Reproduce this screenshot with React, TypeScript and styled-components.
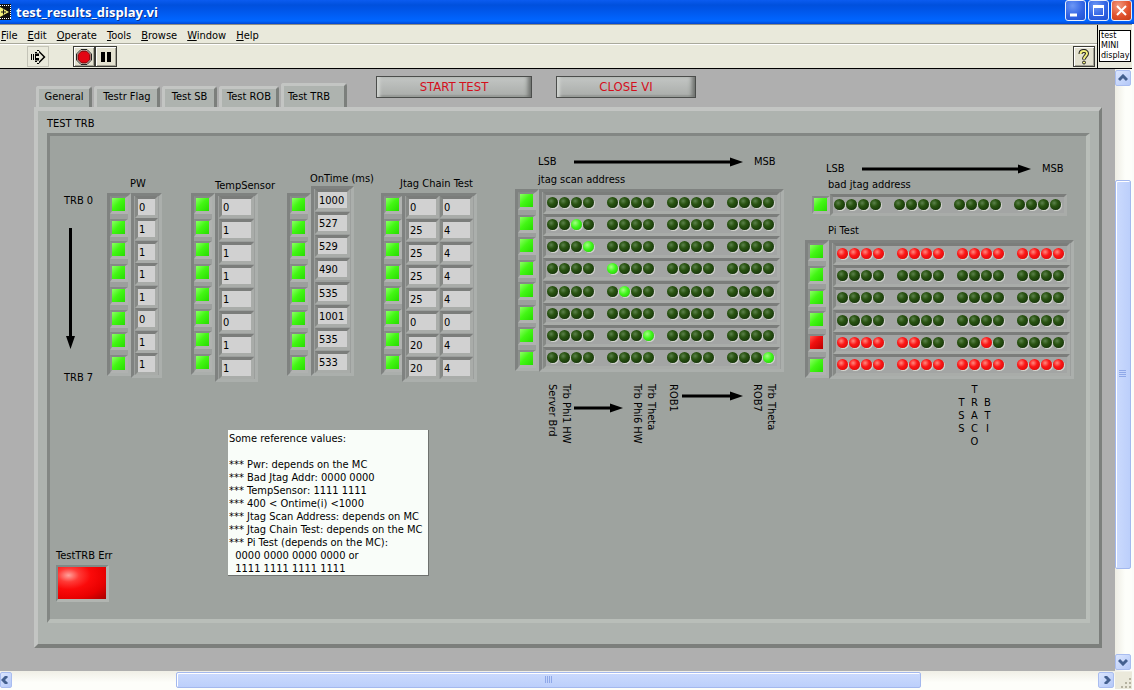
import React from 'react';
import styled, { createGlobalStyle, css } from 'styled-components';

const GlobalStyle = createGlobalStyle`
  * { box-sizing: border-box; }
  body {
    margin: 0;
    background: #fbfcf8;
    font-family: "DejaVu Sans Condensed", "DejaVu Sans", sans-serif;
    font-size: 11px;
    line-height: 14px;
    color: #000;
  }
  button, input { font: inherit; color: inherit; margin: 0; padding: 0; }
`;

/* ---------- window chrome ---------- */

const Window = styled.div`
  display: flex;
  flex-direction: column;
  min-height: 100vh;
  overflow: hidden;
`;

const TitleBar = styled.header`
  display: flex;
  align-items: center;
  height: 24px;
  gap: 4px;
  background: linear-gradient(#0b5cf0 0, #0050dd 5px, #0054e6 9px, #0062fb 18px, #0066ff 21px, #0046d2 24px);
`;

const Title = styled.h1`
  flex: 1;
  margin: 0;
  color: #fff;
  font: bold 13px/16px "Open Sans", "Noto Sans", sans-serif;
  text-shadow: 1px 1px 0 #0a2f8c;
`;

const CaptionButtons = styled.div`
  display: flex;
  gap: 2px;
  padding-right: 2px;
  align-self: flex-start;
`;

const CaptionButton = styled.button<{ $close?: boolean }>`
  width: 21px;
  height: 21px;
  border: 1px solid #e8eefc;
  border-radius: 3px;
  background: ${(p) =>
    p.$close
      ? 'radial-gradient(circle at 35% 25%, #f09a80, #e2522d 55%, #c23c16)'
      : 'radial-gradient(circle at 35% 25%, #6d97f5, #3264e4 55%, #1f50d0)'};
  svg { display: block; }
`;

const Bars = styled.div`
  display: flex;
  height: 45px;
  margin-right: 2px;
  border-top: 1px solid #8f8f86;
  border-bottom: 1px solid #000;
  background: #e9e9db;
`;

const BarStack = styled.div`
  flex: 1;
  display: flex;
  flex-direction: column;
`;

const MenuBar = styled.nav`
  display: flex;
  gap: 10px;
  height: 19px;
  padding: 4px 0 0 1px;
  border-bottom: 1px solid #a9a99c;
`;

const MenuItem = styled.button`
  height: 14px;
  border: 0;
  background: none;
`;

const ToolBar = styled.div`
  display: flex;
  align-items: center;
  flex: 1;
  padding: 0 2px 0 27px;
  border-top: 1px solid #fff;
`;

const ToolButton = styled.button<{ $flat?: boolean }>`
  width: 22px;
  height: 21px;
  display: grid;
  place-items: center;
  ${(p) =>
    p.$flat
      ? css`
          border: 1px solid #c4c4b8;
          background: #e9e9db;
        `
      : css`
          border: 1px solid #3c3c36;
          box-shadow: inset 1px 1px 0 #fff, inset -1px -1px 0 #a3a294;
          background: #e4e2d0;
        `}
`;

const RunControls = styled.div`
  display: flex;
  margin-left: 24px;
  margin-right: auto;
`;

const IconPane = styled.div`
  width: 35px;
  padding: 5px 1px 0;
  border-left: 1px solid #000;
`;

const ViIcon = styled.div`
  height: 32px;
  padding-left: 1px;
  border: 1px solid #000;
  background: #fff;
  overflow: hidden;
  font: 8px/10px "DejaVu Sans", sans-serif;
`;

/* ---------- scroll bars ---------- */

const Workspace = styled.div`
  flex: 1;
  display: flex;
  margin-right: 2px;
`;

const ScrollColumn = styled.div`
  display: flex;
  flex-direction: column;
  width: 17px;
  padding: 1px 0;
  background: linear-gradient(90deg, #eeede4, #fdfefa 60%);
`;

const ScrollRow = styled.div`
  display: flex;
  height: 19px;
  margin-right: 2px;
  padding: 1px 0;
  background: linear-gradient(#f0efe6, #fdfefa 60%);
`;

const ArrowButton = styled.button<{ $clipped?: boolean }>`
  flex: none;
  width: ${(p) => (p.$clipped ? 12 : 16)}px;
  height: 16px;
  border: 1px solid #a9bdf0;
  border-radius: 2px;
  background: linear-gradient(135deg, #dbe6fe, #b4c8f8);
  display: grid;
  place-items: center;
`;

const Space = styled.div<{ $share: number }>`
  flex: ${(p) => p.$share} 0 0;
`;

const Thumb = styled.div<{ $share: number; $vertical?: boolean }>`
  flex: ${(p) => p.$share} 0 0;
  display: grid;
  place-items: center;
  border: 1px solid #a3b8ee;
  border-radius: 2px;
  box-shadow: inset 1px 1px 0 #fff;
  background: linear-gradient(${(p) => (p.$vertical ? '90deg' : '180deg')}, #cbdafd, #bccffb);
  ${(p) => (p.$vertical ? 'width: 16px;' : 'height: 16px;')}
`;

const SizeGrip = styled.div`
  width: 17px;
  margin-left: 1px;
  display: grid;
  place-items: end;
  background: #ebe9db;
`;

/* ---------- front panel ---------- */

const FrontPanel = styled.main`
  flex: 1;
  display: flex;
  flex-direction: column;
  padding: 0 13px 23px 34px;
  background: #afafaf;
`;

const PanelHeader = styled.div`
  display: flex;
  height: 38px;
  padding-left: 2px;
`;

const TabList = styled.div`
  display: flex;
  align-items: flex-end;
  gap: 2px;
  margin-right: 29px;
`;

const Tab = styled.button<{ $width: number; $active?: boolean }>`
  width: ${(p) => p.$width}px;
  height: 21px;
  padding-bottom: 2px;
  border: solid;
  border-width: 3px 3px 0 3px;
  border-color: #c3c5c3 #7c7f7c #c3c5c3 #c3c5c3;
  border-radius: 3px 3px 0 0;
  background: #aeb3af;
  white-space: nowrap;
  display: flex;
  justify-content: center;
  align-items: center;
  ${(p) =>
    p.$active &&
    css`
      height: 28px;
      margin-bottom: -4px;
      padding: 0 10px 4px 0;
    `}
`;

const CommandButton = styled.button<{ $width: number }>`
  width: ${(p) => p.$width}px;
  height: 22px;
  margin: 7px 24px 0 0;
  border: 1px solid #4b4d4b;
  box-shadow: inset 5px 0 3px -2px #cfd2cf, inset -5px 0 4px -2px #6c6f6c, inset 0 -2px 1px #9b9e9b;
  background: linear-gradient(#c3c6c4, #a9aca9);
  color: #d40f1c;
  font-size: 13px;
`;

const TabPage = styled.section`
  flex: 1;
  display: flex;
  flex-direction: column;
  padding: 6px 9px 21px;
  border: solid;
  border-width: 4px 3px 4px 4px;
  border-color: #c3c5c3 #7c7f7c #7c7f7c #c3c5c3;
  background: #aeb3af;
`;

const PageTitle = styled.h2`
  margin: 0 0 2px;
  font: inherit;
`;

const Board = styled.div`
  flex: 1;
  display: flex;
  padding-left: 6px;
  border: solid;
  border-width: 3px 4px 4px 3px;
  border-color: #838784 #b9beb9 #b9beb9 #838784;
  background: #9ea39f;
`;

const LeftSide = styled.div`
  flex: none;
  width: 459px;
  display: flex;
  flex-direction: column;
`;

const Instruments = styled.div`
  display: grid;
  grid-template-columns: 43px 84px 96px 94px 134px;
  height: 246px;
  padding-left: 8px;
`;

const Axis = styled.div`
  display: flex;
  flex-direction: column;
  padding-top: 58px;
  svg { margin: 20px 0 22px 2px; }
`;

const Group = styled.div<{ $top: number }>`
  padding-top: ${(p) => p.$top}px;
`;

const GroupLabel = styled.div<{ $indent: number; $gap: number }>`
  padding-left: ${(p) => p.$indent}px;
  margin-bottom: ${(p) => p.$gap}px;
  white-space: nowrap;
`;

const FramePair = styled.div<{ $end?: boolean }>`
  display: flex;
  align-items: ${(p) => (p.$end ? 'flex-end' : 'flex-start')};
`;

const Frame = styled.div<{ $height: number; $slim?: boolean; $padded?: boolean }>`
  display: flex;
  flex-direction: column;
  justify-content: space-between;
  height: ${(p) => p.$height}px;
  padding: ${(p) => (p.$padded ? '0 1px' : '0')};
  border: solid;
  border-width: 3px ${(p) => (p.$slim ? 0 : 3)}px 3px 3px;
  border-color: #7f8280 #abafac #abafac #7f8280;
  background: #9c9f9d;
`;

const sunken = css`
  border: 3px solid;
  border-color: #7b7d7b #a9aca9 #a9aca9 #868986;
`;

const SquareWell = styled.div`
  flex: none;
  width: 18px;
  height: 18px;
  border: solid;
  border-width: 2px 3px 3px 2px;
  border-color: #858986 #b0b2b0 #b0b2b0 #8c908d;
`;

const SquareLed = styled.div<{ $red?: boolean }>`
  width: 13px;
  height: 13px;
  background: ${(p) =>
    p.$red
      ? 'linear-gradient(135deg, #ff5a50, #f21010 40%, #b80000)'
      : 'linear-gradient(135deg, #8cff66, #43f714 45%, #27dc00)'};
`;

const NumberRow = styled.div`
  display: flex;
  gap: 1px;
`;

const NumberBox = styled.input<{ $width: number }>`
  ${sunken}
  width: ${(p) => p.$width}px;
  height: 22px;
  padding: 1px 0 0 1px;
  border-radius: 0;
  outline: 0;
  background: #d1d1d1;
`;

const LedWell = styled.div`
  ${sunken}
  display: flex;
  align-items: center;
  gap: 12px;
  width: 237px;
  height: 22px;
  padding: 0 0 1px 1px;
  background: #a3a5a4;
`;

const Nibble = styled.div`
  display: flex;
  gap: 1px;
  width: 48px;
`;

const ledColors = {
  o: 'radial-gradient(circle at 38% 36%, #5c824c 0, #2a5412 35%, #17370a 75%)',
  g: 'radial-gradient(circle at 38% 36%, #a5ff85 0, #3ff51a 45%, #2bcf0c 80%)',
  r: 'radial-gradient(circle at 38% 36%, #ff8a80 0, #fb1717 40%, #e00b0b 80%)',
};

type LedState = keyof typeof ledColors;

const RoundLed = styled.div<{ $state: LedState }>`
  width: 11px;
  height: 11px;
  border-radius: 50%;
  box-shadow: 1px 1px 0 #d3d5d0;
  background: ${(p) => ledColors[p.$state]};
`;

const ScaleRow = styled.div<{ $indent: number; $gap: number }>`
  display: grid;
  grid-template-columns: 36px 180px auto;
  justify-content: start;
  align-items: center;
  padding-left: ${(p) => p.$indent}px;
  margin-bottom: ${(p) => p.$gap}px;
`;

const ScanSide = styled.div`
  flex: none;
  width: 290px;
  padding-top: 19px;
`;

const PiSide = styled.div`
  flex: 1;
  padding-top: 26px;
`;

const BadRow = styled.div`
  display: flex;
  align-items: center;
  margin-bottom: 8px;
  padding-left: 7px;
`;

const ScanLegend = styled.div`
  display: grid;
  grid-template-columns: 29px 56px 36px 16px 68px 28px;
  align-items: start;
  justify-items: start;
  padding: 12px 0 0 30px;
`;

const VerticalText = styled.div`
  writing-mode: vertical-rl;
  white-space: pre;
`;

const ArrowSlot = styled.div<{ $drop: number }>`
  padding-top: ${(p) => p.$drop}px;
`;

const PiLegend = styled.div`
  display: grid;
  grid-template-columns: repeat(3, 13px);
  align-items: center;
  padding: 4px 0 0 150px;
  line-height: 13px;
  text-align: center;
  white-space: pre-line;
`;

const LowerLeft = styled.div`
  flex: 1;
  display: flex;
  padding-top: 48px;
`;

const ErrorBlock = styled.div`
  align-self: flex-end;
  width: 172px;
  padding-bottom: 17px;
`;

const ErrorLamp = styled.div`
  width: 53px;
  height: 37px;
  margin-top: 2px;
  border: solid;
  border-width: 2px 3px 3px 2px;
  border-color: #808a87 #b1b5b1 #b1b5b1 #808a87;
  background: radial-gradient(ellipse at 22% 26%, #ffa29c 0, #ff3a36 20%, #fb0a0a 42%, #e80000 70%, #8c0000 112%);
`;

const Note = styled.div`
  align-self: flex-start;
  width: 201px;
  padding: 2px 0 0 1px;
  margin-bottom: -1px;
  border-right: 1px solid #6f726f;
  border-bottom: 1px solid #6f726f;
  background: #f9fdf9;
  line-height: 13px;
  white-space: pre;
`;

/* ---------- drawings ---------- */

const RightArrow = ({ length }: { length: number }) => (
  <svg width={length} height="10" style={{ display: 'block' }}>
    <path d={`M0 5H${length - 12}`} stroke="#000" strokeWidth="3" />
    <path d={`M${length - 13} 0.5L${length} 5L${length - 13} 9.5Z`} />
  </svg>
);

const DownArrow = () => (
  <svg width="10" height="121">
    <path d="M4.500 0V110" stroke="#000" strokeWidth="3" />
    <path d="M0 108H9L4.500 121Z" />
  </svg>
);

const chevrons = {
  up: 'M1 6L5 2L9 6',
  down: 'M1 2L5 6L9 2',
  left: 'M6 0L2 4L6 8',
  right: 'M4 0L8 4L4 8',
};

const Chevron = ({ to }: { to: keyof typeof chevrons }) => (
  <svg width="10" height="8">
    <path d={chevrons[to]} fill="none" stroke="#44608f" strokeWidth="3" />
  </svg>
);

/* ---------- composed instruments ---------- */

const LedFrame = ({ states, height, slim }: { states: string; height: number; slim?: boolean }) => (
  <Frame $height={height} $slim={slim}>
    {[...states].map((s, i) => (
      <SquareWell key={i}>
        <SquareLed $red={s === 'r'} />
      </SquareWell>
    ))}
  </Frame>
);

const NumberFrame = ({ name, rows, width, height }: { name: string; rows: number[][]; width: number; height: number }) => (
  <Frame $height={height} $padded>
    {rows.map((row, i) => (
      <NumberRow key={i}>
        {row.map((v, j) => (
          <NumberBox key={j} $width={width} readOnly value={v} aria-label={`${name} ${i}`} />
        ))}
      </NumberRow>
    ))}
  </Frame>
);

const LedStrip = ({ bits }: { bits: string }) => (
  <LedWell>
    {bits.split(' ').map((nibble, i) => (
      <Nibble key={i}>
        {[...nibble].map((b, j) => (
          <RoundLed key={j} $state={b as LedState} />
        ))}
      </Nibble>
    ))}
  </LedWell>
);

const LedArray = ({ rows, height }: { rows: string[]; height: number }) => (
  <Frame $height={height} $padded>
    {rows.map((bits, i) => (
      <LedStrip key={i} bits={bits} />
    ))}
  </Frame>
);

const OFF = 'oooo oooo oooo oooo';
const RED = 'rrrr rrrr rrrr rrrr';
const ALL_OK = 'gggggggg';

const scanRows = [
  OFF,
  'oogo oooo oooo oooo',
  'ooog oooo oooo oooo',
  'oooo gooo oooo oooo',
  'oooo ogoo oooo oooo',
  OFF,
  'oooo ooog oooo oooo',
  'oooo oooo oooo ooog',
];

const piRows = [RED, OFF, OFF, OFF, 'rrrr rroo ooro oooo', RED];

const bits = [0, 1, 1, 1, 1, 0, 1, 1].map((v) => [v]);
const onTimes = [1000, 527, 529, 490, 535, 1001, 535, 533].map((v) => [v]);
const chain = [[0, 0], [25, 4], [25, 4], [25, 4], [25, 4], [0, 0], [20, 4], [20, 4]];

const menus = ['File', 'Edit', 'Operate', 'Tools', 'Browse', 'Window', 'Help'];

const noteText = `Some reference values:

*** Pwr: depends on the MC
*** Bad Jtag Addr: 0000 0000
*** TempSensor: 1111 1111
*** 400 < Ontime(i) <1000
*** Jtag Scan Address: depends on MC
*** Jtag Chain Test: depends on the MC
*** Pi Test (depends on the MC):
  0000 0000 0000 0000 or
  1111 1111 1111 1111`;

export default function App() {
  return (
    <Window>
      <GlobalStyle />
      <TitleBar>
        <svg width="12" height="16">
          <rect width="11" height="16" fill="#111" />
          <path d="M0 1.5H11M0 14.5H11" stroke="#fff" strokeDasharray="1 1" />
          <path d="M10.500 1V15" stroke="#fff" strokeDasharray="1 1" />
          <path d="M0 3L9 8L0 13Z" fill="#f4f07a" />
          <path d="M1 8H6M3.500 5.500V10.500" stroke="#111" />
        </svg>
        <Title>test_results_display.vi</Title>
        <CaptionButtons>
          <CaptionButton aria-label="Minimize">
            <svg width="19" height="19"><path d="M4 14H11" stroke="#fff" strokeWidth="3" /></svg>
          </CaptionButton>
          <CaptionButton aria-label="Maximize">
            <svg width="19" height="19">
              <path d="M4.500 5V14.500H14.500V5" fill="none" stroke="#fff" />
              <path d="M4 5.500H15" stroke="#fff" strokeWidth="3" />
            </svg>
          </CaptionButton>
          <CaptionButton $close aria-label="Close">
            <svg width="19" height="19"><path d="M5 5L14 14M14 5L5 14" stroke="#fff" strokeWidth="2" /></svg>
          </CaptionButton>
        </CaptionButtons>
      </TitleBar>

      <Bars>
        <BarStack>
          <MenuBar>
            {menus.map((m) => (
              <MenuItem key={m}><u>{m[0]}</u>{m.slice(1)}</MenuItem>
            ))}
          </MenuBar>
          <ToolBar>
            <ToolButton $flat aria-label="Run">
              <svg width="16" height="14">
                <path d="M1.500 4V10M3.500 4V10" stroke="#000" />
                <path d="M5 2.500H7M5 11.500H7M7 0.500H9M7 13.500H9" stroke="#000" />
                <path d="M9 0.500L15.500 7L9 13.500V10.500H5V3.500H9Z" fill="#000" />
                <path d="M6 7H10V5L12 7L10 9V7" fill="#e9e9db" stroke="#e9e9db" strokeWidth="2" />
              </svg>
            </ToolButton>
            <RunControls>
              <ToolButton aria-label="Abort">
                <svg width="16" height="16">
                  <path d="M5 0.500H11L15.500 5V11L11 15.500H5L0.500 11V5Z" fill="#f2e6dc" stroke="#222" />
                  <path d="M5.500 2H10.500L14 5.500V10.500L10.500 14H5.500L2 10.500V5.500Z" fill="#e30613" stroke="#5a0a0a" />
                </svg>
              </ToolButton>
              <ToolButton aria-label="Pause">
                <svg width="12" height="12"><path d="M3 1V11M9 1V11" stroke="#000" strokeWidth="4" /></svg>
              </ToolButton>
            </RunControls>
            <ToolButton aria-label="Show context help">
              <svg width="12" height="16">
                <path d="M2.500 5C2.500 1 9 1 9 4.500C9 7 6 7 6 10.500" fill="none" stroke="#222" strokeWidth="4" />
                <path d="M2.500 5C2.500 1 9 1 9 4.500C9 7 6 7 6 10" fill="none" stroke="#f1ee7c" strokeWidth="2" />
                <circle cx="6" cy="13.500" r="1.500" fill="#f1ee7c" stroke="#222" />
              </svg>
            </ToolButton>
          </ToolBar>
        </BarStack>
        <IconPane>
          <ViIcon>test<br />MINI<br />display</ViIcon>
        </IconPane>
      </Bars>

      <Workspace>
        <FrontPanel>
          <PanelHeader>
            <TabList role="tablist">
              <Tab role="tab" $width={56}>General</Tab>
              <Tab role="tab" $width={66}>Testr Flag</Tab>
              <Tab role="tab" $width={55}>Test SB</Tab>
              <Tab role="tab" $width={60}>Test ROB</Tab>
              <Tab role="tab" $width={66} $active aria-selected>Test TRB</Tab>
            </TabList>
            <CommandButton $width={156}>START TEST</CommandButton>
            <CommandButton $width={140}>CLOSE VI</CommandButton>
          </PanelHeader>

          <TabPage>
            <PageTitle>TEST TRB</PageTitle>
            <Board>
              <LeftSide>
                <Instruments>
                  <Axis>
                    <span>TRB 0</span>
                    <DownArrow />
                    <span>TRB 7</span>
                  </Axis>
                  <Group $top={41}>
                    <GroupLabel $indent={23} $gap={2}>PW</GroupLabel>
                    <FramePair>
                      <LedFrame states={ALL_OK} height={183} />
                      <NumberFrame name="PW" rows={bits} width={23} height={185} />
                    </FramePair>
                  </Group>
                  <Group $top={43}>
                    <GroupLabel $indent={24} $gap={0}>TempSensor</GroupLabel>
                    <FramePair>
                      <LedFrame states={ALL_OK} height={182} />
                      <NumberFrame name="TempSensor" rows={bits} width={35} height={189} />
                    </FramePair>
                  </Group>
                  <Group $top={36}>
                    <GroupLabel $indent={23} $gap={0}>OnTime (ms)</GroupLabel>
                    <FramePair $end>
                      <LedFrame states={ALL_OK} height={183} />
                      <NumberFrame name="OnTime" rows={onTimes} width={35} height={190} />
                    </FramePair>
                  </Group>
                  <Group $top={41}>
                    <GroupLabel $indent={19} $gap={2}>Jtag Chain Test</GroupLabel>
                    <FramePair>
                      <LedFrame states={ALL_OK} height={182} slim />
                      <NumberFrame name="Jtag Chain Test" rows={chain} width={33} height={189} />
                    </FramePair>
                  </Group>
                </Instruments>
                <LowerLeft>
                  <ErrorBlock>
                    TestTRB Err
                    <ErrorLamp />
                  </ErrorBlock>
                  <Note>{noteText}</Note>
                </LowerLeft>
              </LeftSide>

              <ScanSide>
                <ScaleRow $indent={23} $gap={4}>
                  <span>LSB</span>
                  <RightArrow length={169} />
                  <span>MSB</span>
                </ScaleRow>
                <GroupLabel $indent={23} $gap={2}>jtag scan address</GroupLabel>
                <FramePair>
                  <LedFrame states={ALL_OK} height={182} />
                  <LedArray rows={scanRows} height={183} />
                </FramePair>
                <ScanLegend>
                  <VerticalText>{'Trb Phi1 HW\nServer Brd'}</VerticalText>
                  <ArrowSlot $drop={19}><RightArrow length={49} /></ArrowSlot>
                  <VerticalText>{'Trb Theta\nTrb Phi6 HW'}</VerticalText>
                  <VerticalText>ROB1</VerticalText>
                  <ArrowSlot $drop={7}><RightArrow length={61} /></ArrowSlot>
                  <VerticalText>{'Trb Theta\nROB7'}</VerticalText>
                </ScanLegend>
              </ScanSide>

              <PiSide>
                <ScaleRow $indent={21} $gap={2}>
                  <span>LSB</span>
                  <RightArrow length={169} />
                  <span>MSB</span>
                </ScaleRow>
                <GroupLabel $indent={23} $gap={2}>bad jtag address</GroupLabel>
                <BadRow>
                  <SquareWell><SquareLed /></SquareWell>
                  <LedStrip bits={OFF} />
                </BadRow>
                <GroupLabel $indent={23} $gap={2}>Pi Test</GroupLabel>
                <FramePair>
                  <LedFrame states="ggggrg" height={138} />
                  <LedArray rows={piRows} height={139} />
                </FramePair>
                <PiLegend>
                  <div>{'T\nS\nS'}</div>
                  <div>{'T\nR\nA\nC\nO'}</div>
                  <div>{'B\nT\nI'}</div>
                </PiLegend>
              </PiSide>
            </Board>
          </TabPage>
        </FrontPanel>
        <ScrollColumn>
          <ArrowButton aria-label="Scroll up"><Chevron to="up" /></ArrowButton>
          <Space $share={94} />
          <Thumb $share={390} $vertical>
            <svg width="8" height="8"><path d="M0 0.500H7M0 2.500H7M0 4.500H7M0 6.500H7" stroke="#8fa8e8" /></svg>
          </Thumb>
          <Space $share={85} />
          <ArrowButton aria-label="Scroll down"><Chevron to="down" /></ArrowButton>
        </ScrollColumn>
      </Workspace>
      <ScrollRow>
        <ArrowButton $clipped aria-label="Scroll left"><Chevron to="left" /></ArrowButton>
        <Space $share={165} />
        <Thumb $share={745}>
          <svg width="8" height="8"><path d="M0.500 0V7M2.500 0V7M4.500 0V7M6.500 0V7" stroke="#8fa8e8" /></svg>
        </Thumb>
        <Space $share={178} />
        <ArrowButton aria-label="Scroll right"><Chevron to="right" /></ArrowButton>
        <SizeGrip>
          <svg width="12" height="12">
            <path d="M1 10H3M5 10H7M9 10H11M5 6H7M9 6H11M9 2H11" stroke="#b5b2a0" strokeWidth="2" />
          </svg>
        </SizeGrip>
      </ScrollRow>
    </Window>
  );
}
